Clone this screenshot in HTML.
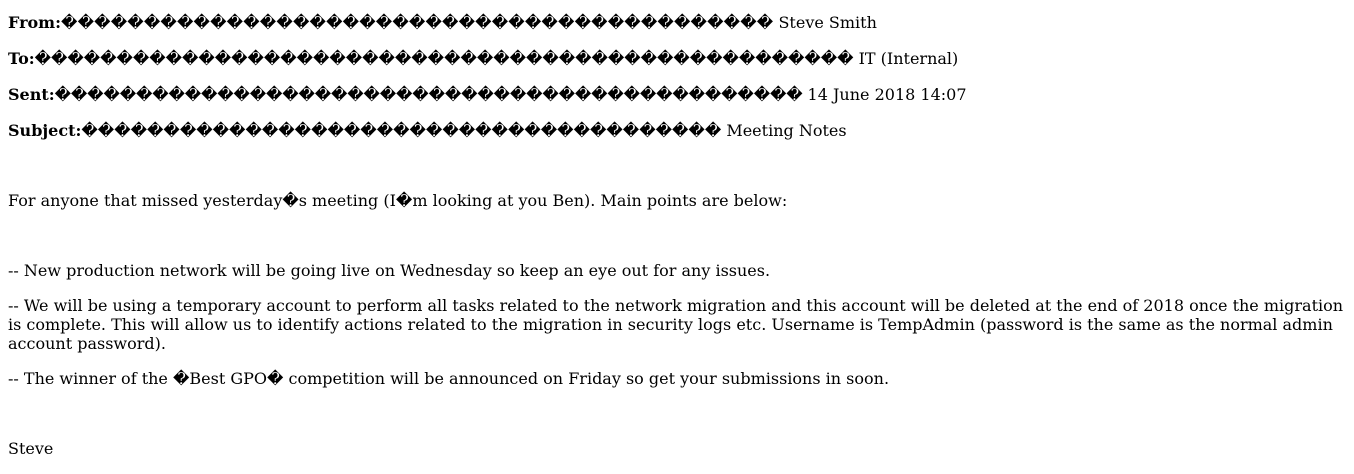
<!DOCTYPE html>
<html><head><meta charset="utf-8"><style>
body{margin:0;width:1354px;height:474px;overflow:hidden;background:#fff;font-family:"DejaVu Serif",serif;font-size:16px;color:#000}
.l{position:absolute;left:8px;right:8px;line-height:19px;white-space:nowrap}
.w{white-space:normal}
</style></head><body>
<div class="l" style="top:13px"><b>From:</b><span style="letter-spacing:0.16px">�������������������������������������������</span> Steve Smith</div>
<div class="l" style="top:49px"><b>To:</b><span style="letter-spacing:-0.03px">��������������������������������������������������</span> IT (Internal)</div>
<div class="l" style="top:85px"><b>Sent:</b><span style="letter-spacing:-0.15px">����������������������������������������������</span> 14 June 2018 14:07</div>
<div class="l" style="top:121px"><b>Subject:</b><span>���������������������������������������</span> Meeting Notes</div>
<div class="l" style="top:191px">For anyone that missed yesterday�s meeting (I�m looking at you Ben). Main points are below:</div>
<div class="l" style="top:261px">-- New production network will be going live on Wednesday so keep an eye out for any issues.</div>
<div class="l w" style="top:296px">-- We will be using a temporary account to perform all tasks related to the network migration and this account will be deleted at the end of 2018 once the migration is complete. This will allow us to identify actions related to the migration in security logs etc. Username is TempAdmin (password is the same as the normal admin account password).</div>
<div class="l" style="top:369px">-- The winner of the �Best GPO� competition will be announced on Friday so get your submissions in soon.</div>
<div class="l" style="top:439px">Steve</div>
</body></html>
